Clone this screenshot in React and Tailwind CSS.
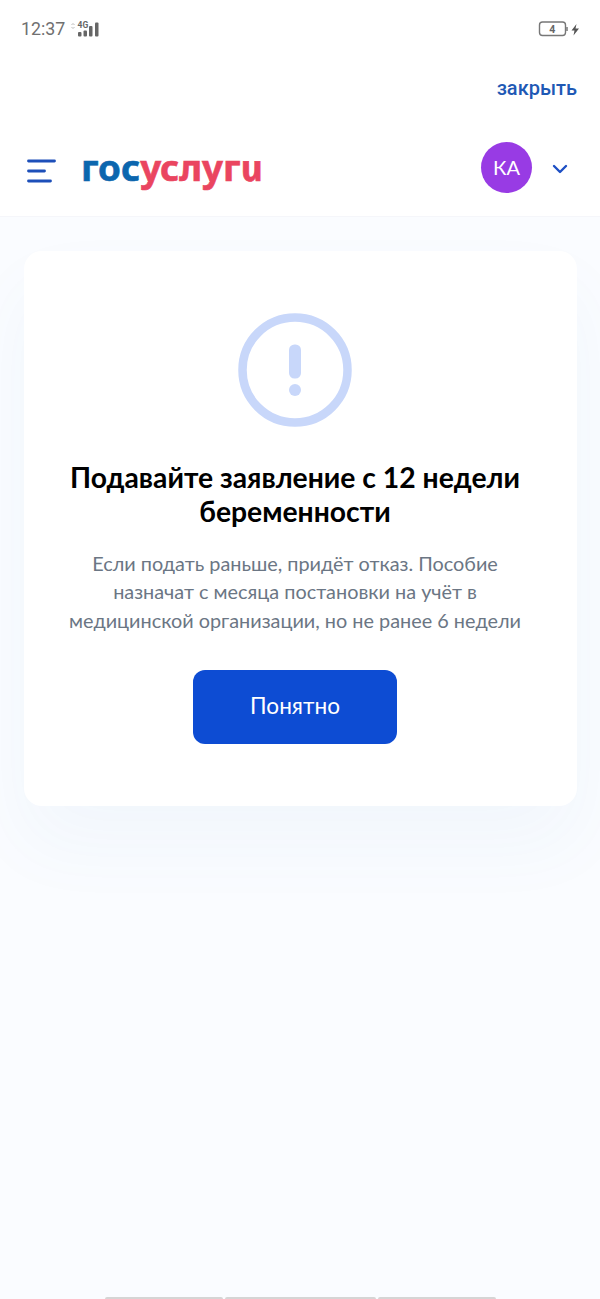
function StatusBar() {
  return (
    <div className="flex h-[58px] items-center justify-between pl-[21px] pr-5 text-[#666] font-['Roboto',sans-serif]">
      <div className="flex items-center">
        <span className="text-[17.800px] leading-none text-[#707070]">12:37</span>
        <svg className="ml-[6px]" width="30" height="18" viewBox="0 0 30 18">
          <path d="M.5 5 2 3.500 3.500 5M.5 7 2 8.500 3.500 7" fill="none" stroke="#bbb" strokeWidth="1" />
          <text x="6.500" y="7.500" fontSize="8.500" fontWeight="700" fill="#666">4G</text>
          <rect x="7" y="12" width="3.500" height="4.500" rx="1" fill="#666" />
          <rect x="12.500" y="10.500" width="3.500" height="6" rx="1" fill="#666" />
          <rect x="18" y="6" width="3.500" height="10.500" rx="1" fill="#666" />
          <rect x="24" y="2.500" width="3.500" height="14" rx="1" fill="#666" />
        </svg>
      </div>
      <svg width="42" height="18" viewBox="0 0 42 18">
        <rect x="1.500" y="2" width="26" height="13.500" rx="3" fill="none" stroke="#777" strokeWidth="1.400" />
        <path d="M29 7v4" stroke="#777" strokeWidth="1.500" />
        <text x="14.300" y="12.500" fontSize="10.500" fontWeight="700" textAnchor="middle" fill="#666">4</text>
        <path d="M38.500 4 33.500 10.500h3L35.500 15.500l5.500-7h-3.500z" fill="#555" />
      </svg>
    </div>
  )
}

function Header() {
  return (
    <header className="flex h-[98px] items-center justify-between border-b border-[#f5f6fa] pl-[27px] pr-8">
      <div className="flex items-center">
        <svg className="mt-[6px]" width="29" height="24" viewBox="0 0 29 24" fill="none" stroke="#1d4fb9" strokeWidth="2.800" strokeLinecap="round">
          <path d="M1.500 2h26M1.500 12h16M1.500 22h22" />
        </svg>
        <div className="ml-[25px] w-[190px] whitespace-nowrap text-[36px] font-bold leading-none font-['Noto_Sans',sans-serif] [-webkit-text-stroke:0.6px]">
          <div className="inline-block origin-left scale-x-[1.02]">
            <span className="text-[#0b66ae]">гос</span>
            <span className="text-[#ea4560]">услуг</span>
            <span className="inline-block italic skew-x-12 text-[#ea4560]">и</span>
          </div>
        </div>
      </div>
      <div className="flex items-center">
        <div className="flex size-[51px] items-center justify-center rounded-full bg-[#983be4] pb-px text-[20px] text-white">КА</div>
        <svg className="ml-[20px] mt-[2px]" width="16" height="10" viewBox="0 0 16 10" fill="none" stroke="#1d4fc4" strokeWidth="2.400" strokeLinecap="round" strokeLinejoin="round">
          <path d="m2 2 6 6 6-6" />
        </svg>
      </div>
    </header>
  )
}

function NoticeCard() {
  return (
    <section className="ml-6 mr-[23px] mt-[34px] flex h-[555px] flex-col items-center rounded-[18px] bg-white pr-[11px] pt-[62px] text-center shadow-[0_38px_76px_rgba(50,110,190,0.045)]">
      <svg width="114" height="114" viewBox="0 0 114 114">
        <circle cx="57" cy="57" r="52.500" fill="none" stroke="#c8d7fa" strokeWidth="8.500" />
        <rect x="51" y="31.500" width="12" height="34" rx="5.500" fill="#c8d7fa" />
        <circle cx="57" cy="77" r="6" fill="#c8d7fa" />
      </svg>
      <h1 className="mt-[34px] whitespace-nowrap text-[28.3px] font-bold leading-[33.500px] text-black">
        Подавайте заявление с 12 недели
        <br />
        беременности
      </h1>
      <p className="mt-[21px] whitespace-nowrap text-[19.85px] leading-[28.3px] text-[#6b7684]">
        Если подать раньше, придёт отказ. Пособие
        <br />
        назначат с месяца постановки на учёт в
        <br />
        медицинской организации, но не ранее 6 недели
      </p>
      <button className="mt-9 h-[74px] w-[204px] rounded-[12px] bg-[#0d4cd3] pb-px text-[22.6px] text-white">
        Понятно
      </button>
    </section>
  )
}

export default function App() {
  return (
    <div className="flex h-[1299px] w-[600px] flex-col overflow-hidden bg-[#fafcff] font-['Lato',sans-serif]">
      <div className="bg-white">
        <StatusBar />
        <div className="flex h-[61px] items-center justify-end pb-[2px] pr-[23px]">
          <button className="text-[20px] font-medium text-[#1f59b5] font-['Roboto',sans-serif]">закрыть</button>
        </div>
        <Header />
      </div>
      <main className="flex-1">
        <NoticeCard />
      </main>
      <footer className="flex h-[2px] justify-center gap-[2px]">
        <div className="w-[118px] rounded-t bg-[#d5d5d5]" />
        <div className="w-[151px] rounded-t bg-[#d5d5d5]" />
        <div className="w-[118px] rounded-t bg-[#d5d5d5]" />
      </footer>
    </div>
  )
}
